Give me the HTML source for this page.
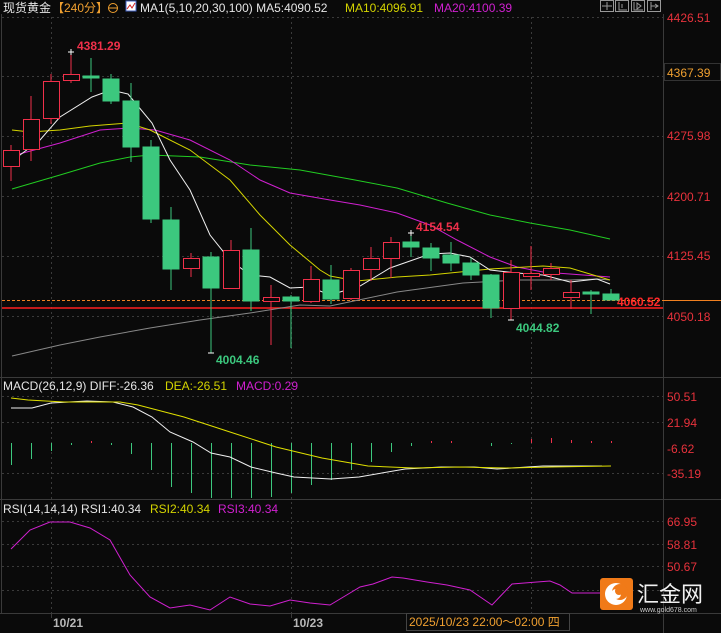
<!DOCTYPE html>
<html><head><meta charset="utf-8"><style>
html,body{margin:0;padding:0;background:#0a0a0a;}
svg{display:block;}
text{font-family:"Liberation Sans","Noto Sans CJK SC",sans-serif;}
</style></head><body>
<svg width="721" height="633" viewBox="0 0 721 633" xmlns="http://www.w3.org/2000/svg">
<rect width="721" height="633" fill="#0a0a0a"/>
<!-- grid -->
<g stroke="#3a3a3a" stroke-width="1" stroke-dasharray="2,3">
<line x1="2" y1="17.5" x2="663" y2="17.5"/>
<line x1="2" y1="76.5" x2="663" y2="76.5"/>
<line x1="2" y1="136.5" x2="663" y2="136.5"/>
<line x1="2" y1="196.5" x2="663" y2="196.5"/>
<line x1="2" y1="256.5" x2="663" y2="256.5"/>
<line x1="2" y1="316.5" x2="663" y2="316.5"/>
<line x1="2" y1="396.5" x2="663" y2="396.5"/>
<line x1="2" y1="422.5" x2="663" y2="422.5"/>
<line x1="2" y1="473.5" x2="663" y2="473.5"/>
<line x1="2" y1="521.5" x2="663" y2="521.5"/>
<line x1="2" y1="544.5" x2="663" y2="544.5"/>
<line x1="2" y1="566.5" x2="663" y2="566.5"/>
<line x1="2" y1="590.5" x2="663" y2="590.5"/>
<line x1="51.5" y1="17" x2="51.5" y2="613"/>
<line x1="291.5" y1="17" x2="291.5" y2="613"/>
<line x1="531.5" y1="17" x2="531.5" y2="613"/>
</g>
<g stroke="#3a3a3a" stroke-width="1">
<line x1="1.5" y1="14" x2="1.5" y2="613"/>
<line x1="663.5" y1="14" x2="663.5" y2="633"/>
<line x1="0" y1="377.5" x2="721" y2="377.5"/>
<line x1="0" y1="499.5" x2="721" y2="499.5"/>
<line x1="0" y1="613.5" x2="721" y2="613.5"/>
<line x1="51.5" y1="613" x2="51.5" y2="618"/>
<line x1="291.5" y1="613" x2="291.5" y2="618"/>
</g>
<!-- header -->
<text x="3" y="12" font-size="12" fill="#e6e6e6">现货黄金</text>
<text x="52" y="12" font-size="12" fill="#f0a030">【240分】</text>
<circle cx="113" cy="8" r="4.5" fill="none" stroke="#f0a030" stroke-width="1"/>
<line x1="108" y1="8" x2="118" y2="8" stroke="#f0a030"/>
<rect x="126" y="1" width="10" height="10" fill="#fff" stroke="#4060c0"/>
<polyline points="127,9 130,5 132,8 135,3" fill="none" stroke="#d02020"/>
<text x="140" y="12" font-size="12" fill="#e6e6e6">MA1(5,10,20,30,100)  MA5:4090.52</text>
<text x="345" y="12" font-size="12" fill="#d4d400">MA10:4096.91</text>
<text x="434" y="12" font-size="12" fill="#d020d0">MA20:4100.39</text>
<g fill="none" stroke="#999" stroke-width="1">
<rect x="600.5" y="0.5" width="13" height="11"/><rect x="615.5" y="0.5" width="13" height="11"/>
<rect x="631.5" y="0.5" width="13" height="11"/><rect x="647.5" y="0.5" width="13" height="11"/>
<path d="M607 2v8M602 6h10M619 2v8h8M622 4v4M634 2v8h9M637 3l4 3-4 3zM651 2v8M651 6h7M655 4l3 2-3 2"/>
</g>
<!-- axis labels -->
<g font-size="12" fill="#e8323c">
<text x="667" y="22">4426.51</text>
<text x="667" y="140">4275.98</text>
<text x="667" y="201">4200.71</text>
<text x="667" y="260">4125.45</text>
<text x="667" y="321">4050.18</text>
<text x="667" y="401">50.51</text>
<text x="667" y="427">21.94</text>
<text x="667" y="453">-6.62</text>
<text x="667" y="478">-35.19</text>
<text x="667" y="526">66.95</text>
<text x="667" y="549">58.81</text>
<text x="667" y="571">50.67</text>
</g>
<rect x="664.5" y="63.5" width="56" height="17" fill="#0a0a0a" stroke="#333"/>
<text x="667" y="77" font-size="12" fill="#f0a030">4367.39</text>
<!-- price lines -->
<line x1="2" y1="300.5" x2="663" y2="300.5" stroke="#f08020" stroke-dasharray="3,2"/>
<line x1="663" y1="300.5" x2="721" y2="300.5" stroke="#f08020"/>
<line x1="2" y1="308" x2="663" y2="308" stroke="#ff2020" stroke-width="1.5"/>
<text x="617" y="306" font-size="12" font-weight="bold" fill="#ff2a2a">4060.52</text>
<!-- MAs -->
<g fill="none" stroke-width="1">
<polyline stroke="#888" points="12,356 60,345 100,337 150,328 200,320 250,313 300,305 330,306 397,292 463,283 517,280 570,280 597,279 610,280"/>
<polyline stroke="#22cc22" points="12,189 60,175 100,163 130,157 150,155 200,157 250,165 300,170 355,180 397,188 447,203 490,215 530,223 570,230 610,239"/>
<polyline stroke="#d020d0" points="12,156 60,143 100,130 130,128 155,130 190,140 230,160 260,180 290,193 330,200 360,205 397,213 430,225 457,240 490,257 517,267 543,272 610,277"/>
<polyline stroke="#d4d400" points="12,130 30,132 60,130 90,126 128,123 150,130 190,150 230,180 260,215 290,245 320,270 330,276 357,281 397,277 430,275 490,269 543,266 570,268 610,280"/>
<polyline stroke="#f0f0f0" points="12,161 40,140 60,117 92,97 111,90 128,94 152,123 170,160 190,190 210,235 230,260 250,275 270,277 290,288 310,287 330,295 360,286 390,268 430,254 450,253 470,257 490,270 517,273 543,275 570,282 597,279 610,284"/>
</g>
<!-- candles -->
<g stroke-width="1">
<g stroke="#f0304a" fill="#0a0a0a">
<line x1="11" y1="145" x2="11" y2="181"/><rect x="3.5" y="150.5" width="16" height="16"/>
<line x1="31" y1="96" x2="31" y2="161"/><rect x="23.5" y="119.5" width="16" height="30"/>
<line x1="51" y1="74" x2="51" y2="124"/><rect x="43.5" y="81.5" width="16" height="37"/>
<line x1="71" y1="52" x2="71" y2="83"/><rect x="63.5" y="74.5" width="16" height="6"/>
<line x1="191" y1="253" x2="191" y2="277"/><rect x="183.5" y="258.5" width="16" height="10"/>
<line x1="231" y1="240" x2="231" y2="288"/><rect x="223.5" y="250.5" width="16" height="38"/>
<line x1="271" y1="285" x2="271" y2="345"/><rect x="263.5" y="297.5" width="16" height="4"/>
<line x1="311" y1="266" x2="311" y2="303"/><rect x="303.5" y="279.5" width="16" height="22"/>
<line x1="351" y1="268" x2="351" y2="300"/><rect x="343.5" y="270.5" width="16" height="28"/>
<line x1="371" y1="247" x2="371" y2="281"/><rect x="363.5" y="258.5" width="16" height="11"/>
<line x1="391" y1="237" x2="391" y2="278"/><rect x="383.5" y="242.5" width="16" height="16"/>
<line x1="511" y1="260" x2="511" y2="320"/><rect x="503.5" y="272.5" width="16" height="36"/>
<line x1="531" y1="246" x2="531" y2="290"/><rect x="523.5" y="273.5" width="16" height="3"/>
<line x1="551" y1="263" x2="551" y2="280"/><rect x="543.5" y="268.5" width="16" height="6"/>
<line x1="571" y1="280" x2="571" y2="309"/><rect x="563.5" y="292.5" width="16" height="5"/>
</g>
<g stroke="#3cc87e" fill="#3cc87e">
<line x1="91" y1="58" x2="91" y2="92"/><rect x="83" y="76" width="16" height="2"/>
<line x1="111" y1="74" x2="111" y2="104"/><rect x="103" y="79" width="16" height="22"/>
<line x1="131" y1="83" x2="131" y2="162"/><rect x="123" y="101" width="16" height="46"/>
<line x1="151" y1="140" x2="151" y2="223"/><rect x="143" y="147" width="16" height="72"/>
<line x1="171" y1="207" x2="171" y2="290"/><rect x="163" y="220" width="16" height="49"/>
<line x1="211" y1="252" x2="211" y2="353"/><rect x="203" y="257" width="16" height="31"/>
<line x1="251" y1="228" x2="251" y2="311"/><rect x="243" y="250" width="16" height="51"/>
<line x1="291" y1="295" x2="291" y2="348"/><rect x="283" y="297" width="16" height="4"/>
<line x1="331" y1="265" x2="331" y2="304"/><rect x="323" y="280" width="16" height="19"/>
<line x1="411" y1="233" x2="411" y2="257"/><rect x="403" y="242" width="16" height="5"/>
<line x1="431" y1="243" x2="431" y2="271"/><rect x="423" y="248" width="16" height="10"/>
<line x1="451" y1="242" x2="451" y2="271"/><rect x="443" y="255" width="16" height="8"/>
<line x1="471" y1="258" x2="471" y2="280"/><rect x="463" y="263" width="16" height="12"/>
<line x1="491" y1="274" x2="491" y2="318"/><rect x="483" y="275" width="16" height="33"/>
<line x1="591" y1="290" x2="591" y2="314"/><rect x="583" y="292" width="16" height="2"/>
<line x1="611" y1="289" x2="611" y2="300"/><rect x="603" y="294" width="16" height="6"/>
</g>
</g>
<g stroke="#fff"><path d="M68 52h6M71 49v6M208 353h6M408 233h6M411 230v6M508 320h6"/></g>
<text x="77" y="50" font-size="12" font-weight="bold" fill="#f0304a">4381.29</text>
<text x="216" y="364" font-size="12" font-weight="bold" fill="#3cc87e">4004.46</text>
<text x="416" y="231" font-size="12" font-weight="bold" fill="#f0304a">4154.54</text>
<text x="516" y="332" font-size="12" font-weight="bold" fill="#3cc87e">4044.82</text>
<!-- MACD -->
<text x="3" y="390" font-size="12" fill="#e6e6e6">MACD(26,12,9) DIFF:-26.36</text>
<text x="165" y="390" font-size="12" fill="#d4d400">DEA:-26.51</text>
<text x="236" y="390" font-size="12" fill="#d020d0">MACD:0.29</text>
<g stroke="#3cc87e">
<path d="M11.5 443v22M31.5 443v16M51.5 443v8M71.5 443v2M111.5 443v2M131.5 443v11M151.5 443v27M171.5 443v44M191.5 443v50M211.5 443v55M231.5 443v55M251.5 443v55M271.5 443v54M291.5 443v50M311.5 443v42M331.5 443v37M351.5 443v27M371.5 443v19M391.5 443v9M411.5 443v3M491.5 443v3M511.5 443v1"/>
</g>
<g stroke="#f0304a">
<path d="M91.5 443v-2M431.5 443v-2M451.5 443v-2M531.5 443v-4M551.5 443v-5M571.5 443v-3M591.5 443v-2M611.5 443v-2"/>
</g>
<polyline fill="none" stroke="#f0f0f0" points="11,408 32,408 51,403 87,401 113,402 133,407 152,417 170,432 193,442 211,453 230,457 251,467 276,473 294,477 331,479 359,477 405,469 441,467 474,467 497,469 543,466 602,466"/>
<polyline fill="none" stroke="#e0e000" points="11,398 28,400 64,402 120,402 138,405 184,417 230,432 276,447 322,458 368,466 414,468 460,467 506,468 552,467 611,466"/>
<!-- RSI -->
<text x="3" y="513" font-size="12" fill="#e6e6e6">RSI(14,14,14) RSI1:40.34</text>
<text x="150" y="513" font-size="12" fill="#d4d400">RSI2:40.34</text>
<text x="218" y="513" font-size="12" fill="#d020d0">RSI3:40.34</text>
<polyline fill="none" stroke="#d020d0" points="11,549 30,530 50,522 70,522 90,528 110,540 130,575 150,597 170,608 190,605 210,610 230,597 250,604 270,606 290,600 310,603 330,605 350,593 360,587 373,584 392,577 403,578 427,582 447,585 470,590 492,605 512,584 537,582 550,581 560,585 572,593 600,593 607,597"/>
<!-- logo -->
<rect x="600" y="578" width="33" height="32" rx="3" fill="#f07a18"/>
<circle cx="616" cy="594" r="11" fill="#fff"/>
<circle cx="620" cy="592" r="8" fill="#f07a18"/>
<circle cx="616" cy="594" r="5" fill="#fff"/>
<circle cx="619" cy="591" r="4" fill="#f07a18"/>
<text x="637" y="602" font-size="22" fill="#f0f0f0" font-family="Noto Sans CJK SC,sans-serif">汇金网</text>
<text x="640" y="612" font-size="7" fill="#ccc">www.gold678.com</text>
<!-- bottom axis -->
<text x="53" y="627" font-size="12" font-weight="bold" fill="#b8b8b8">10/21</text>
<text x="293" y="627" font-size="12" font-weight="bold" fill="#b8b8b8">10/23</text>
<rect x="406.5" y="613.5" width="163" height="17" fill="#0a0a0a" stroke="#444"/>
<text x="409" y="626" font-size="12" fill="#f0a030">2025/10/23 22:00～02:00 四</text>
</svg>
</body></html>
